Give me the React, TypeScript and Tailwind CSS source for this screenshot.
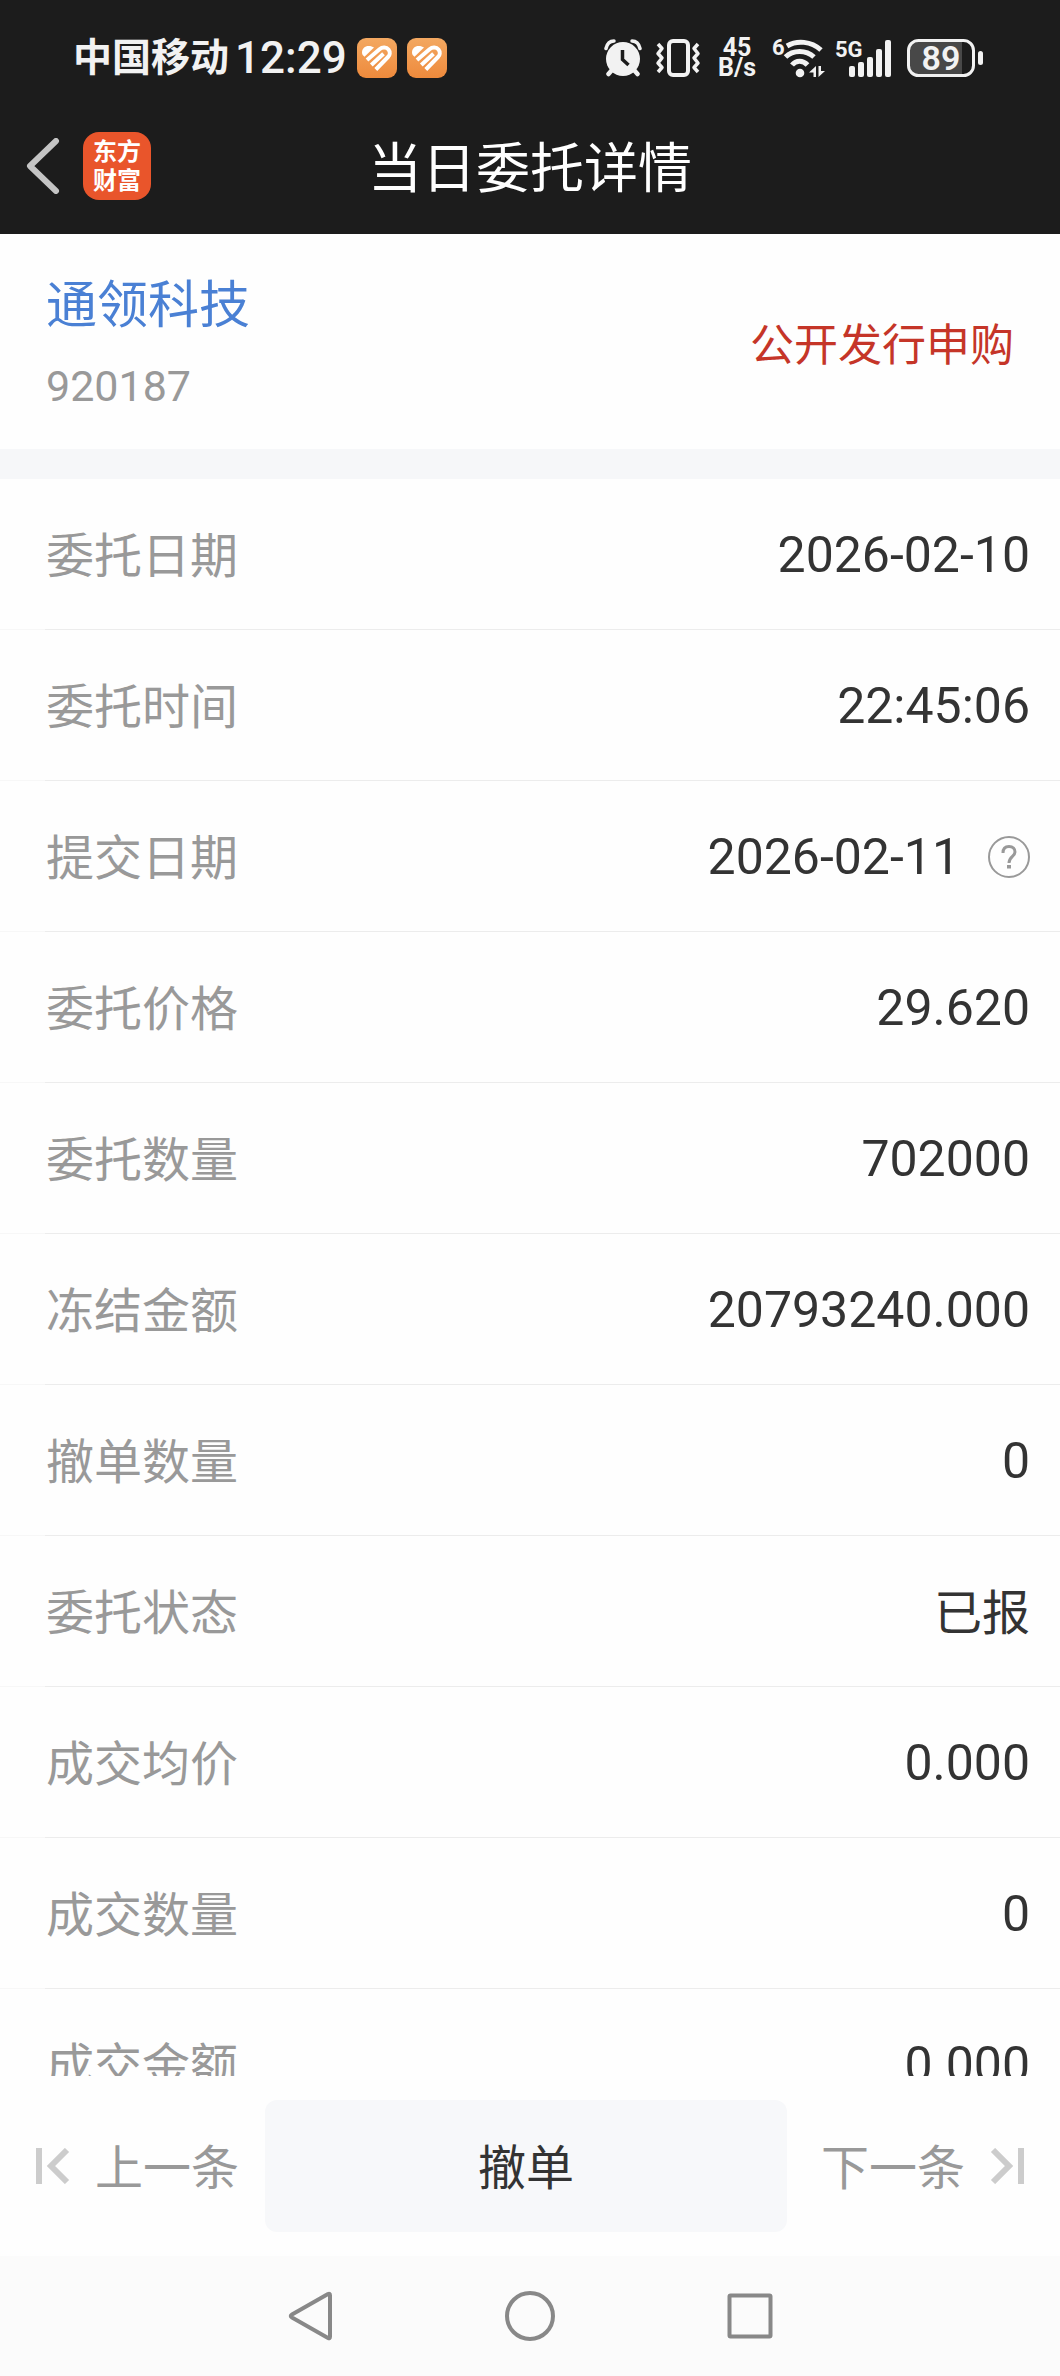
import React from 'react';

type Row = {
  label: string;
  value: string;
  help?: boolean;
};

const rows: Row[] = [
  { label: '委托日期', value: '2026-02-10' },
  { label: '委托时间', value: '22:45:06' },
  { label: '提交日期', value: '2026-02-11', help: true },
  { label: '委托价格', value: '29.620' },
  { label: '委托数量', value: '702000' },
  { label: '冻结金额', value: '20793240.000' },
  { label: '撤单数量', value: '0' },
  { label: '委托状态', value: '已报' },
  { label: '成交均价', value: '0.000' },
  { label: '成交数量', value: '0' },
  { label: '成交金额', value: '0.000' },
];

const HeartBadge: React.FC = () => (
  <svg width="40" height="40" viewBox="0 0 40 40" aria-hidden="true">
    <defs>
      <linearGradient id="badge" x1="0" y1="0" x2="0" y2="1">
        <stop offset="0" stopColor="#f3a861" />
        <stop offset="1" stopColor="#ee8a3c" />
      </linearGradient>
    </defs>
    <rect width="40" height="40" rx="9" fill="url(#badge)" />
    <path d="M5 14.500C5 10.500 8 8 11.500 8C14 8 15.500 8.500 17 9.600L7.500 18.800C6 17.500 5 16.500 5 14.500Z" fill="#fff" />
    <path
      d="M10 22L22.500 11.200C25.500 8.800 29.500 9.200 31.500 11.500C33.500 14 33 17 31 19L18.800 31.500M14.300 27L26.500 15.800"
      fill="none"
      stroke="#fff"
      strokeWidth="4"
    />
  </svg>
);

const AlarmIcon: React.FC = () => (
  <svg width="38" height="38" viewBox="0 0 38 38" aria-hidden="true">
    <path d="M8 31L4.500 35M30 31L33.500 35" stroke="#f2f2f2" strokeWidth="4.500" strokeLinecap="round" />
    <circle cx="19" cy="20" r="17" fill="#f2f2f2" />
    <path d="M2 9.500C3 5 6 2 10 2M28 2C32 2 35 5 36 9.500" fill="none" stroke="#f2f2f2" strokeWidth="3.500" strokeLinecap="round" />
    <path d="M18.500 11V20.500L24.500 26" fill="none" stroke="#1c1c1c" strokeWidth="3.500" />
  </svg>
);

const VibrateIcon: React.FC = () => (
  <svg width="46" height="38" viewBox="0 0 46 38" fill="none" stroke="#f2f2f2" aria-hidden="true">
    <rect x="14" y="2" width="19" height="34" rx="4" strokeWidth="4" />
    <path d="M3 5L7 9.500L3 14.500L7 19L3 24L7 28.500L3 33" strokeWidth="3.500" strokeLinejoin="round" />
    <path d="M43 5L39 9.500L43 14.500L39 19L43 24L39 28.500L43 33" strokeWidth="3.500" strokeLinejoin="round" />
  </svg>
);

const WifiIcon: React.FC = () => (
  <svg width="52" height="42" viewBox="0 0 52 42" fill="none" className="overflow-visible" aria-hidden="true">
    <text x="-1" y="18" fontSize="22" fontWeight="700" fill="#f2f2f2" className="font-[Roboto]">6</text>
    <path d="M14 9C24 3 38 4 48 13" stroke="#f2f2f2" strokeWidth="5" />
    <path d="M12.500 20C20 12.500 33 12.500 41 20" stroke="#f2f2f2" strokeWidth="5" />
    <path d="M19 28C23 23 30 23 34.500 28" stroke="#f2f2f2" strokeWidth="5" />
    <circle cx="27" cy="36" r="4.300" fill="#f2f2f2" />
    <path d="M36 35.500L43 29V40H40.500V35.500ZM45.500 29H48V34H52L45.500 40Z" fill="#f2f2f2" />
  </svg>
);

const SignalIcon: React.FC = () => (
  <svg width="58" height="38" viewBox="0 0 58 38" fill="#f2f2f2" className="overflow-visible" aria-hidden="true">
    <text x="0" y="18" fontSize="22" fontWeight="700" className="font-[Roboto]">5G</text>
    <rect x="14" y="27" width="6" height="11" rx="2" />
    <rect x="23" y="23" width="6" height="15" rx="2" />
    <rect x="32" y="18" width="6" height="20" rx="2" />
    <rect x="41" y="10" width="6" height="28" rx="2" />
    <rect x="50" y="1" width="6" height="37" rx="2" />
  </svg>
);

const BatteryIcon: React.FC = () => (
  <svg width="76" height="38" viewBox="0 0 76 38" fill="none" aria-hidden="true">
    <path d="M11 3H55V35H11C6 35 3 32 3 27V11C3 6 6 3 11 3Z" fill="#484848" />
    <rect x="1.500" y="1.500" width="65" height="35" rx="10" stroke="#f2f2f2" strokeWidth="3" />
    <rect x="71" y="12" width="5" height="14" rx="2.500" fill="#f2f2f2" />
    <text x="34" y="31" fontSize="34" fontWeight="600" textAnchor="middle" fill="#f2f2f2" className="font-[Roboto]">89</text>
  </svg>
);

const StatusBar: React.FC = () => (
  <div className="flex h-28 items-center justify-between pt-1 pl-[73px] pr-[77px] text-[#f2f2f2]">
    <div className="flex items-center">
      <span className="text-[39px] font-bold">中国移动</span>
      <span className="ml-[6px] text-[44px] font-medium">12:29</span>
      <span className="ml-[10px] flex gap-[10px]">
        <HeartBadge />
        <HeartBadge />
      </span>
    </div>
    <div className="flex items-center">
      <AlarmIcon />
      <span className="ml-[13px] flex"><VibrateIcon /></span>
      <span className="ml-[16px] flex w-10 flex-col items-center text-[25px] leading-5 font-bold">
        <span>45</span>
        <span>B/s</span>
      </span>
      <span className="ml-[16px] flex"><WifiIcon /></span>
      <span className="ml-[10px] flex"><SignalIcon /></span>
      <span className="ml-[14px] flex"><BatteryIcon /></span>
    </div>
  </div>
);

const DetailRow: React.FC<{ row: Row }> = ({ row }) => (
  <div className="shrink-0">
    <div className="flex h-[150px] items-center justify-between pl-[46px] pr-[30px]">
      <dt className="pt-[6px] text-[48px] text-[#999]">{row.label}</dt>
      <dd className={`flex items-center gap-7 text-[#333] ${row.value === '已报' ? 'pt-[6px] text-[48px]' : 'pt-[2px] text-[50px]'}`}>
        {row.value}
        {row.help && (
          <button type="button" aria-label="说明">
            <svg width="42" height="42" viewBox="0 0 42 42" fill="none" stroke="#999">
              <circle cx="21" cy="21" r="20" strokeWidth="2" />
              <path d="M15 17C15 12 17.500 10.500 21 10.500C25 10.500 27 13 27 16C27 20.500 21 20.500 21 27" strokeWidth="3" />
              <path d="M21 29V32.500" strokeWidth="4" />
            </svg>
          </button>
        )}
      </dd>
    </div>
    {/* divider, fainter under the left inset */}
    <div className="flex h-px">
      <div className="w-[45px] bg-[#f7f7f7]" />
      <div className="flex-1 bg-[#ececec]" />
    </div>
  </div>
);

const App: React.FC = () => {
  return (
    <div className="flex h-screen flex-col bg-[#fefefe] font-[Roboto,'Noto_Sans_CJK_SC',sans-serif] leading-none">
      <header className="shrink-0 bg-[#1c1c1c] pb-[14px]">
        <StatusBar />
        <div className="grid h-[108px] grid-cols-[1fr_auto_1fr] items-center">
          <div className="flex items-center gap-[23px] pl-[26px]">
            <button type="button" aria-label="返回">
              <svg width="34" height="56" viewBox="0 0 34 56" fill="none" stroke="#c4c4c4" strokeWidth="6">
                <path d="M30 3L4 28L30 53" strokeLinecap="round" strokeLinejoin="round" />
              </svg>
            </button>
            <div className="flex size-[68px] flex-col items-center justify-center rounded-2xl bg-[#e9552b] pt-[2px] text-2xl leading-[29px] font-bold text-white">
              <span>东方</span>
              <span>财富</span>
            </div>
          </div>
          <h1 className="pt-2 text-[54px] text-white">当日委托详情</h1>
        </div>
      </header>

      <section className="flex h-[215px] shrink-0 items-center justify-between pt-2 pl-[46px] pr-[46px]">
        <div className="flex flex-col gap-5">
          <h2 className="text-[51px] leading-[60px] text-[#4a80d4]">通领科技</h2>
          <span className="text-[43px] leading-[60px] text-[#999]">920187</span>
        </div>
        <span className="text-[44px] text-[#c53528]">公开发行申购</span>
      </section>
      <div className="h-[30px] shrink-0 bg-[#f6f7f9]" />

      <dl className="flex min-h-0 flex-1 flex-col overflow-y-auto [scrollbar-width:none]">
        {rows.map((row) => (
          <DetailRow key={row.label} row={row} />
        ))}
      </dl>

      <div className="flex h-[180px] shrink-0 items-center text-[48px] text-[#999]">
        <button type="button" className="flex w-[265px] items-center gap-6 pl-9">
          <svg width="35" height="36" viewBox="0 0 35 36" fill="none" stroke="#ccc" strokeWidth="6">
            <path d="M3 0V36M31 2L15 18L31 34" />
          </svg>
          <span className="pt-[6px]">上一条</span>
        </button>
        <button type="button" className="h-[132px] flex-1 rounded-xl bg-[#f7f8fa] pt-[6px] text-[#333]">
          撤单
        </button>
        <button type="button" className="flex w-[273px] items-center justify-end gap-6 pr-9">
          <span className="pt-[6px]">下一条</span>
          <svg width="35" height="36" viewBox="0 0 35 36" fill="none" stroke="#ccc" strokeWidth="6">
            <path d="M32 0V36M4 2L20 18L4 34" />
          </svg>
        </button>
      </div>

      <nav className="flex h-[120px] shrink-0 items-center justify-center gap-[170px] bg-[#fbfbfb]">
        <button type="button" aria-label="后退">
          <svg width="50" height="50" viewBox="0 0 50 50" fill="none" stroke="#888" strokeWidth="4">
            <path d="M43 3L7 23.500Q4.500 25 7 26.500L43 47Q45 48 45 45.500V4.500Q45 2 43 3Z" />
          </svg>
        </button>
        <button type="button" aria-label="主屏幕">
          <svg width="50" height="50" viewBox="0 0 50 50" fill="none" stroke="#888" strokeWidth="4">
            <circle cx="25" cy="25" r="23" />
          </svg>
        </button>
        <button type="button" aria-label="最近任务">
          <svg width="50" height="50" viewBox="0 0 50 50" fill="none" stroke="#888" strokeWidth="4">
            <rect x="4.500" y="4.500" width="41" height="41" rx="1" />
          </svg>
        </button>
      </nav>
    </div>
  );
};

export default App;
